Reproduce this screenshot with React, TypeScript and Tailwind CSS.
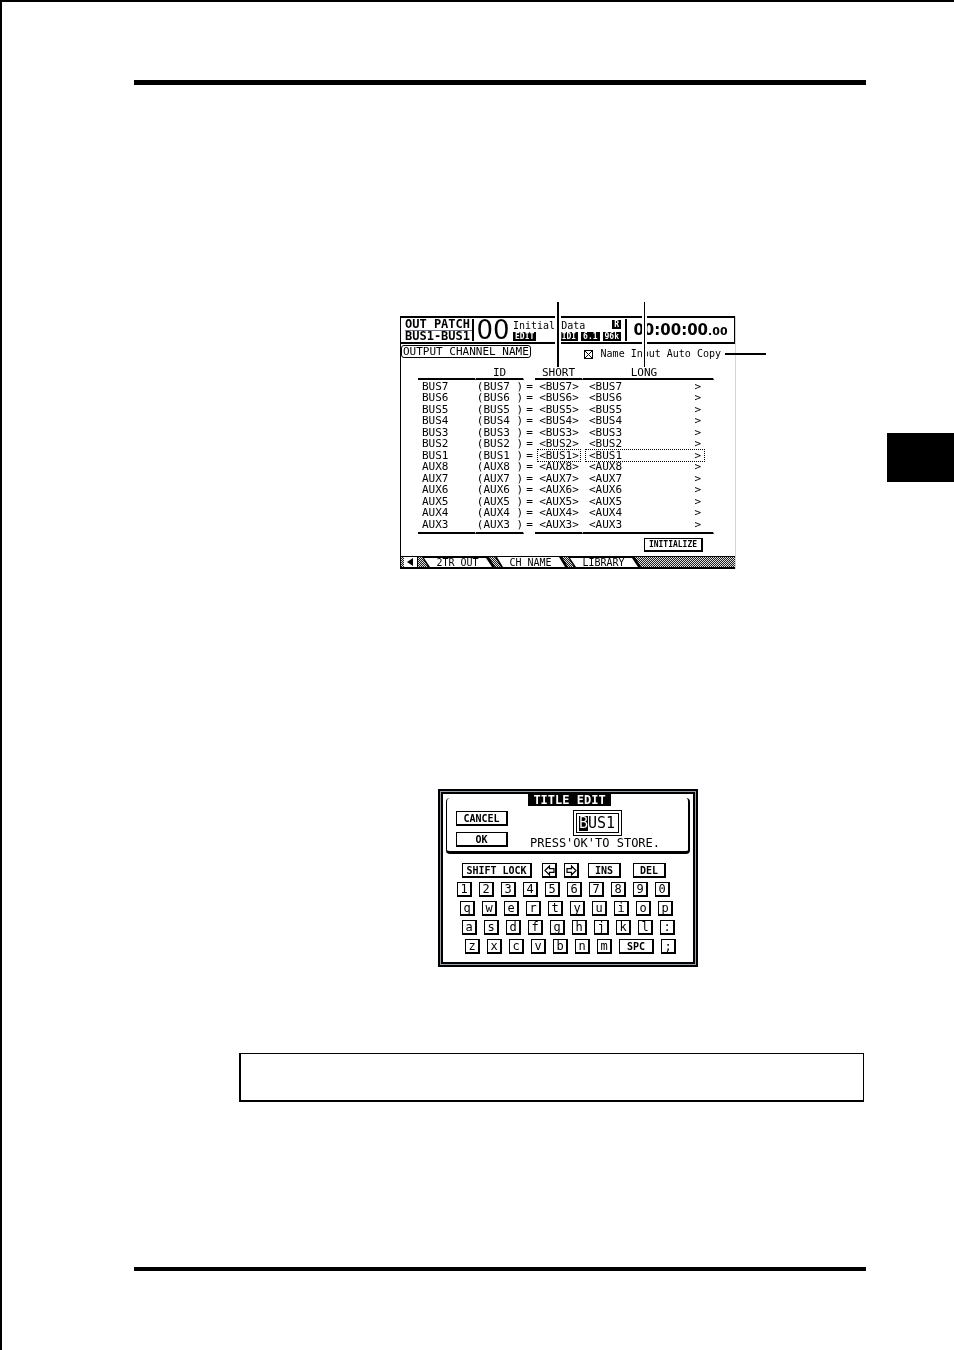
import React from "react";

const channels = [
  "BUS7", "BUS6", "BUS5", "BUS4", "BUS3", "BUS2", "BUS1",
  "AUX8", "AUX7", "AUX6", "AUX5", "AUX4", "AUX3",
];

const keyRows = [
  { pad: "pl-[12px]", keys: "1234567890" },
  { pad: "pl-[15px]", keys: "qwertyuiop" },
  { pad: "pl-[17px]", keys: "asdfghjkl:" },
];

function Badge({ children }: { children: React.ReactNode }) {
  return (
    <span className="flex h-[9px] items-center bg-black px-[2px] text-[8px] font-bold leading-[9px] text-white">
      {children}
    </span>
  );
}

function Key({ children, size = "w-[15px] text-[12px]", label }: { children: React.ReactNode; size?: string; label?: string }) {
  return (
    <button
      type="button"
      aria-label={label}
      className={`flex h-[15px] shrink-0 items-center justify-center border border-r-2 border-b-2 border-black bg-white leading-[12px] ${size}`}
    >
      {children}
    </button>
  );
}

function Arrow({ flip = false }: { flip?: boolean }) {
  return (
    <svg viewBox="0 0 11 11" className={flip ? "size-[11px] rotate-180" : "size-[11px]"} fill="none" stroke="#000" strokeWidth="1.2">
      <path d="M1 5.5 5.5 1v2.7H10v3.6H5.5V10z" />
    </svg>
  );
}

function Tab({ children, active = false }: { children: React.ReactNode; active?: boolean }) {
  return (
    <button
      type="button"
      className="flex h-full w-[73px] bg-black [clip-path:polygon(0_0,calc(100%-6px)_0,100%_100%,6px_100%)]"
    >
      <span
        className={`flex w-full items-center justify-center bg-white pr-[2px] text-[10px] leading-[9px] [clip-path:polygon(2px_0,calc(100%-9px)_0,calc(100%-3px)_100%,8px_100%)] ${
          active ? "h-full pt-[1px]" : "mt-[1px] h-[9px]"
        }`}
      >
        {children}
      </span>
    </button>
  );
}

function ChannelScreen() {
  return (
    <section className="relative mt-[231px] ml-[266px] w-[336px] border-l border-l-black border-r border-r-gray-300">
      <header className="flex h-[28px] border-y-2 border-r border-black">
        <div className="my-[1px] flex w-[73px] flex-col border-r-2 border-black pl-[4px] text-[12px] font-bold leading-[11px]">
          <span className="border-b border-gray-500">OUT PATCH</span>
          <span>BUS1-BUS1</span>
        </div>
        <div className="flex w-[38px] items-center justify-center font-['DejaVu_Sans',sans-serif] text-[26px] leading-[24px]">00</div>
        <div className="flex flex-1 flex-col justify-between pt-[2px] pb-[1px] pl-[1px] pr-[4px]">
          <div className="flex justify-between text-[10px] leading-[11px]">
            <span className="whitespace-pre">Initial Data</span>
            <Badge>R</Badge>
          </div>
          <div className="flex">
            <Badge>EDIT</Badge>
            <span className="flex-1" />
            <div className="flex gap-[3px]">
              <Badge>MIDI</Badge>
              <Badge>6.1</Badge>
              <Badge>96k</Badge>
            </div>
          </div>
        </div>
        <div className="my-[1px] flex w-[109px] items-baseline justify-center border-l-2 border-black font-['DejaVu_Sans',sans-serif] text-[15px] font-bold leading-[23px]">
          00:00:00<span className="text-[11px]">.00</span>
        </div>
      </header>

      <div className="flex justify-between pt-[1px] pr-[14px]">
        <h2 className="h-[13px] rounded-[3px] border border-black px-[1px] text-[11px] leading-[12px]">OUTPUT CHANNEL NAME</h2>
        <label className="mt-[4px] flex h-[10px] items-center gap-[8px] text-[10px] leading-[10px]">
          <input
            type="checkbox"
            defaultChecked
            className="size-[9px] appearance-none border border-black checked:bg-[linear-gradient(45deg,transparent_46%,#000_46%,#000_54%,transparent_54%),linear-gradient(-45deg,transparent_46%,#000_46%,#000_54%,transparent_54%)]"
          />
          Name Input Auto Copy
        </label>
      </div>

      <table className="mt-[6px] ml-[17px] w-[296px] table-fixed border-separate border-spacing-0 text-[11px] leading-[11px]">
        <colgroup>
          <col className="w-[58px]" />
          <col className="w-[48px]" />
          <col className="w-[11px]" />
          <col className="w-[48px]" />
          <col />
        </colgroup>
        <thead>
          <tr className="h-[15px] *:border-r *:border-b-2 *:border-r-white *:border-b-black *:p-0 *:align-bottom *:font-normal">
            <td />
            <th>ID</th>
            <td className="border-b-white!" />
            <th>SHORT</th>
            <th className="pr-[8px]!">LONG</th>
          </tr>
        </thead>
        <tbody>
          {channels.map((name) => {
            const frame = name === "BUS1" ? "outline-1 outline-dotted outline-black" : "";
            return (
              <tr key={name} className="h-[12px] even:h-[11px] *:p-0 *:whitespace-pre">
                <td className="pl-[4px]!">{name}</td>
                <td className="text-center">{`(${name} )`}</td>
                <td className="text-center">=</td>
                <td>
                  <div className={`mx-[3px] text-center ${frame}`}>{`<${name}>`}</div>
                </td>
                <td>
                  <div className={`mr-[10px] ml-[3px] flex justify-between px-[3px] ${frame}`}>
                    <span>{`<${name}`}</span>
                    <span>&gt;</span>
                  </div>
                </td>
              </tr>
            );
          })}
        </tbody>
        <tfoot>
          <tr className="h-[4px] *:border-r *:border-b-2 *:border-r-white *:border-b-black *:p-0">
            <td />
            <td />
            <td className="border-b-white!" />
            <td />
            <td />
          </tr>
        </tfoot>
      </table>

      <div className="flex justify-end pt-[4px] pr-[32px] pb-[4px]">
        <button type="button" className="h-[14px] w-[59px] border border-r-2 border-b-2 border-black text-[8px] font-bold leading-[11px]">
          INITIALIZE
        </button>
      </div>

      <nav className="flex h-[13px] border-t border-b-2 border-black bg-[repeating-conic-gradient(#222_0_25%,#ddd_0_50%)] bg-[length:2px_2px] pl-[3px]">
        <button type="button" aria-label="Previous tabs" className="mr-[4px] flex h-full w-[14px] items-center justify-center border-r border-black bg-white">
          <svg viewBox="0 0 8 8" className="size-[8px]"><path d="M0 4 6 0v8z" /></svg>
        </button>
        <Tab>2TR OUT</Tab>
        <Tab active>CH NAME</Tab>
        <Tab>LIBRARY</Tab>
      </nav>

      <i className="absolute -top-[14px] left-[154px] h-[65px] w-[6px] border-x-2 border-white bg-black" />
      <i className="absolute -top-[14px] left-[241px] h-[65px] w-[5px] border-x-2 border-white bg-black" />
      <i className="absolute top-[37px] left-[324px] h-[2px] w-[41px] bg-black" />
    </section>
  );
}

function TitleEdit() {
  return (
    <section className="mt-[220px] ml-[304px] h-[178px] w-[260px] border-5 border-double border-black bg-gray-400">
      <div className="h-full bg-white pt-[4px]">
        <div className="mx-[3px] flex h-[56px] flex-col rounded-[4px] border-r-2 border-b-3 border-l border-black">
          <h2 className="-mt-[4px] ml-[81px] h-[12px] w-[83px] shrink-0 bg-black text-center text-[12px] font-bold leading-[12px] text-white">
            TITLE EDIT
          </h2>
          <div className="flex flex-1 pt-[4px] pl-[9px]">
            <div className="flex w-[74px] flex-col gap-[6px] pt-[1px] font-bold">
              <Key size="w-[52px] pt-[1px] text-[10px]">CANCEL</Key>
              <Key size="w-[52px] pt-[1px] text-[10px]">OK</Key>
            </div>
            <div className="flex flex-col">
              <div className="relative ml-[43px] h-[26px] w-[49px] border-4 border-double border-black">
                <input
                  aria-label="Title"
                  defaultValue="BUS1"
                  className="block h-full w-full bg-white pl-[2px] text-[15px] leading-[18px] outline-none"
                />
                <span className="absolute top-[2px] left-[2px] h-[15px] w-[9px] bg-white mix-blend-difference" />
              </div>
              <p className="pt-[1px] text-[12px] leading-[12px]">PRESS&apos;OK&apos;TO STORE.</p>
            </div>
          </div>
        </div>

        <div className="flex flex-col gap-[4px] pt-[9px] pl-[2px]">
          <div className="flex pl-[17px] font-bold">
            <Key size="w-[70px] pt-[1px] text-[10px]">SHIFT LOCK</Key>
            <div className="ml-[10px] flex gap-[7px]">
              <Key label="Left"><Arrow /></Key>
              <Key label="Right"><Arrow flip /></Key>
            </div>
            <div className="ml-[9px] flex gap-[12px]">
              <Key size="w-[33px] pt-[1px] text-[10px]">INS</Key>
              <Key size="w-[33px] pt-[1px] text-[10px]">DEL</Key>
            </div>
          </div>
          {keyRows.map((row) => (
            <div key={row.keys} className={`flex gap-[7px] ${row.pad}`}>
              {row.keys.split("").map((k) => (
                <Key key={k}>{k}</Key>
              ))}
            </div>
          ))}
          <div className="flex gap-[7px] pl-[20px]">
            {"zxcvbnm".split("").map((k) => (
              <Key key={k}>{k}</Key>
            ))}
            <Key size="w-[35px] pt-[1px] text-[10px] font-bold">SPC</Key>
            <Key>;</Key>
          </div>
        </div>
      </div>
    </section>
  );
}

export default function App() {
  return (
    <div className="flex min-h-screen border-t-2 border-l-2 border-black bg-white font-['DejaVu_Sans_Mono',monospace] text-black">
      <main className="flex-1 pt-[78px] pr-[21px] pb-[79px] pl-[132px]">
        <hr className="h-[5px] border-0 bg-black" />
        <ChannelScreen />
        <TitleEdit />
        <div className="mt-[86px] mr-[2px] ml-[105px] h-[49px] border border-b-2 border-l-2 border-black" />
        <hr className="mt-[165px] h-[4px] border-0 bg-black" />
      </main>
      <aside className="w-[67px] pt-[431px]">
        <div className="h-[49px] bg-black" />
      </aside>
    </div>
  );
}
